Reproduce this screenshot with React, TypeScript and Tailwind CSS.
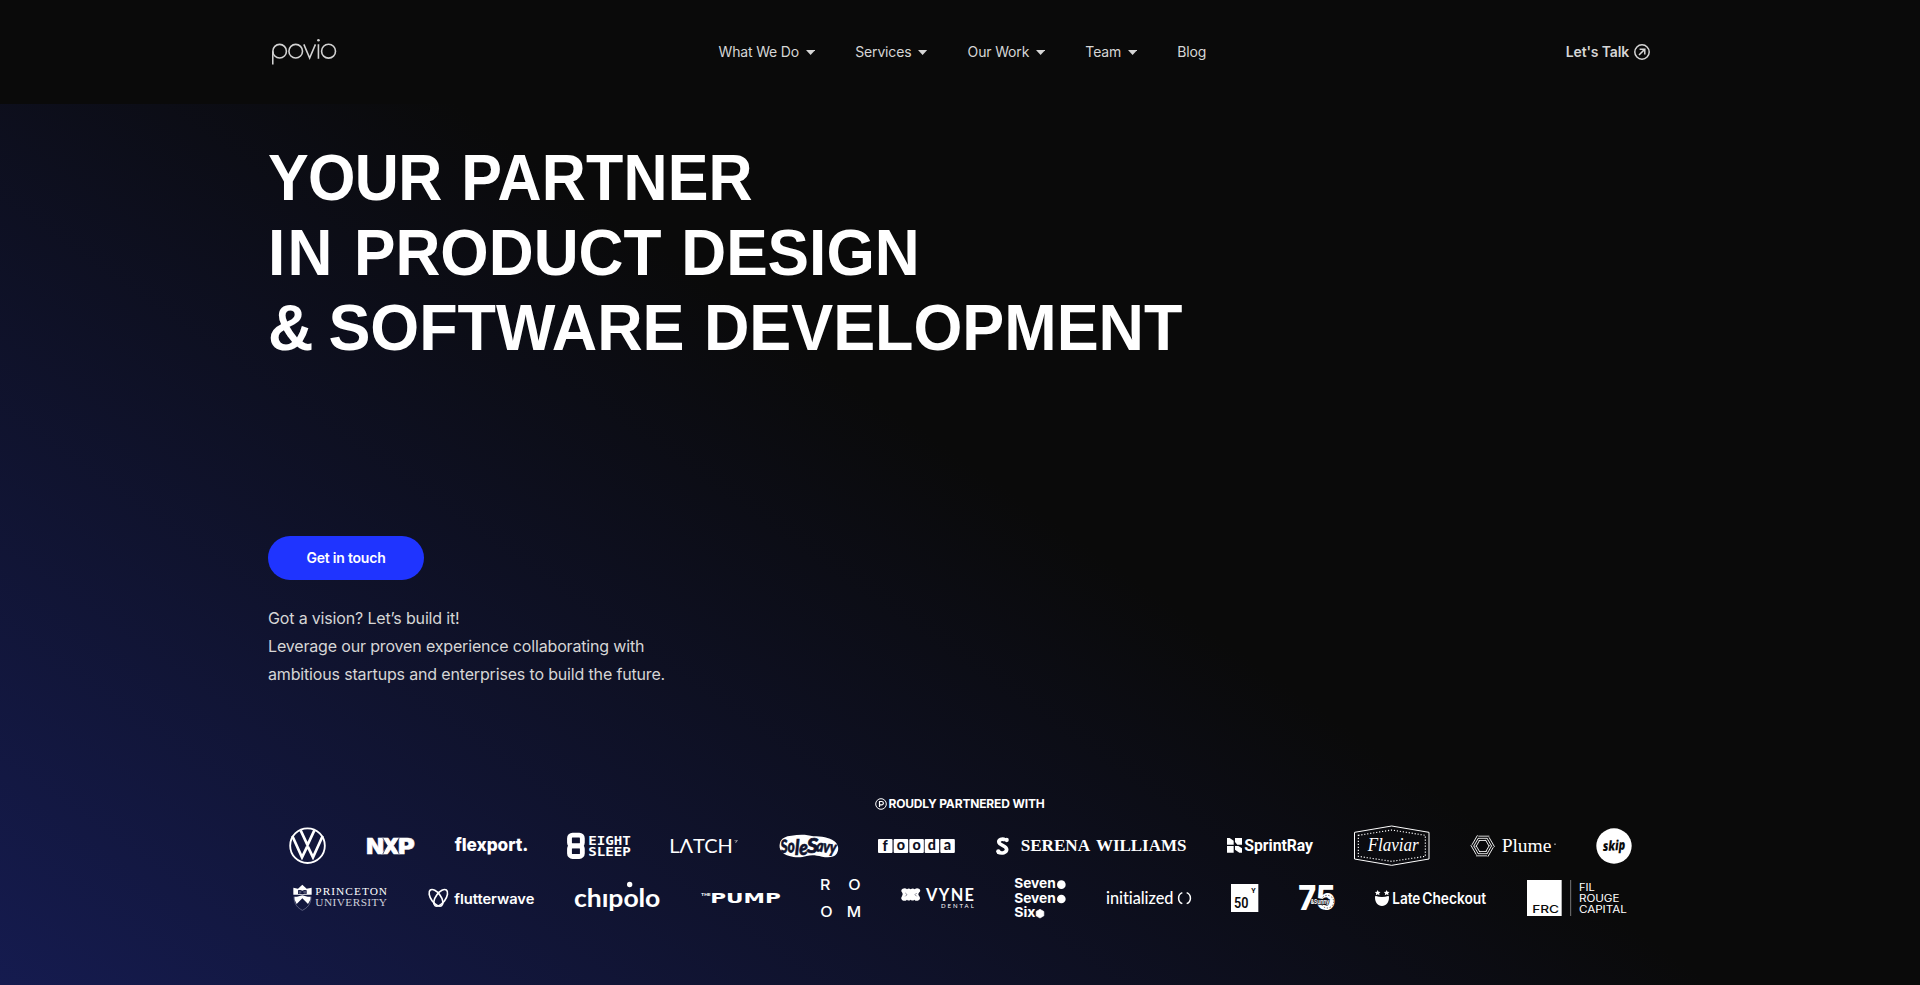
import type { ReactNode } from 'react';

const NAV = [
  { label: 'What We Do', menu: true },
  { label: 'Services', menu: true },
  { label: 'Our Work', menu: true },
  { label: 'Team', menu: true },
  { label: 'Blog', menu: false },
];

/* Partner marks are drawn at three units to the pixel. */
function Mark({ box, label, className, children }: { box: string; label: string; className: string; children: ReactNode }) {
  return (
    <svg viewBox={box} role="img" aria-label={label} className={`shrink-0 overflow-visible ${className}`} fill="#fff">
      {children}
    </svg>
  );
}

type TProps = { x: number; y: number; s: number; w?: number; c?: string; fill?: string; transform?: string; spaced?: boolean; children: ReactNode };

function T({ x, y, s, w, c = '', fill, transform, spaced, children }: TProps) {
  return (
    <text x={x} y={y} fontSize={s} textLength={w} lengthAdjust={spaced ? 'spacing' : 'spacingAndGlyphs'} className={c} fill={fill} transform={transform}>
      {children}
    </text>
  );
}

const inter = "font-['Inter',sans-serif]";
const serif = "font-['Liberation_Serif',serif]";
const lato = "font-['Lato',sans-serif]";

function PovioLogo() {
  return (
    <svg viewBox="66 54 196 84" className="ml-1 h-7 w-[65px]" fill="none" stroke="#d2d2d2" strokeWidth="4.800" role="img" aria-label="povio">
      <circle cx="89" cy="93.500" r="20.500" />
      <path d="M68.300 134V93.500" />
      <circle cx="137.500" cy="93.500" r="20.500" />
      <path d="M162 73l17.500 41L197 73M206 73v43" />
      <circle cx="206" cy="60.500" r="4" fill="#d2d2d2" stroke="none" />
      <circle cx="236.500" cy="93.500" r="21" />
    </svg>
  );
}

function FirstRow() {
  return (
    <div className="flex h-[41px] w-[1344px] gap-10 pl-px">
      <Mark box="57 105 114 123" label="Volkswagen" className="h-[41px] w-[38px]">
        <g fill="none" stroke="#fff" strokeWidth="5.500">
          <circle cx="112.500" cy="167" r="52" />
          <path strokeWidth="8" d="M92 121l20.500 44L133 121M67 138l29 64 14-29h5l14 29 29-64" />
        </g>
      </Mark>
      <Mark box="291 105 144 123" label="NXP" className="h-[41px] w-12">
        <g stroke="#fff" strokeWidth="1.500">
          <T x={289} y={191.500} s={65} w={53} c={`${inter} font-black`}>N</T>
          <T x={334} y={191.500} s={65} w={56} c={`${inter} font-black`}>X</T>
          <T x={384} y={191.500} s={65} w={50} c={`${inter} font-black`}>P</T>
        </g>
        <path d="M338 143l13 24-13 26M388 143l-13 24 13 26" fill="none" stroke="#11153a" strokeWidth="2" />
      </Mark>
      <Mark box="554 105 216 123" label="flexport." className="h-[41px] w-[72px]">
        <T x={553} y={184} s={54} w={221} c={`${inter} font-extrabold`}>flexport.</T>
      </Mark>
      <Mark box="890 105 192 123" label="Eight Sleep" className="h-[41px] w-16">
        <g fill="none" stroke="#fff" strokeWidth="14.500">
          <rect x="897.500" y="135.500" width="38.500" height="32" rx="9" />
          <rect x="897.500" y="167.500" width="38.500" height="32" rx="9" />
        </g>
        <T x={954} y={165} s={37} w={127} c="font-['DejaVu_Sans_Mono',monospace] font-bold">EIGHT</T>
        <T x={954} y={199} s={37} w={127} c="font-['DejaVu_Sans_Mono',monospace] font-bold">SLEEP</T>
      </Mark>
      <Mark box="153 105 204 123" label="Latch" className="h-[41px] w-[68px]">
        <T x={148} y={188} s={55} w={190} c={lato}>LΛTCH</T>
        <path d="M343 152h9l-7 6M352 150l-4 8" fill="none" stroke="#aaa" strokeWidth="2" />
      </Mark>
      <Mark box="477 105 177 123" label="SoleSavy" className="h-[41px] w-[59px]">
        <path d="M480 158c4-14 18-20 34-21 24-4 46-4 66 2 24 0 48 4 62 14 14 10 16 26 8 38-8 12-26 12-44 9-18-4-30-6-46-2-16 5-36 5-52 0-20-5-34-20-28-40z" />
        <g fill="#0f122c" stroke="#0f122c" strokeWidth="2">
          <T x={482} y={188} s={54} w={42} c={`${lato} font-black italic`} transform="rotate(-4 500 170)">So</T>
          <T x={525} y={194} s={60} w={38} c={`${lato} font-black italic`}>le</T>
          <T x={560} y={190} s={60} w={34} c={`${lato} font-black italic`}>S</T>
          <T x={589} y={187} s={50} w={60} c={`${lato} font-black italic`} transform="rotate(6 618 175)">avy</T>
        </g>
      </Mark>
      <Mark box="774 105 234 123" label="Fooda" className="h-[41px] w-[78px]">
        {[774, 821, 868, 914, 961].map((x, i) => (
          <g key={x}>
            <rect x={x} y="147" width="43.500" height="42" rx="3" />
            <text x={x + 21.5} y={i === 0 ? 184 : 181} textAnchor="middle" fontSize="43" fill="#0e1124" className={`${lato} font-black`}>
              {'fooda'[i]}
            </text>
          </g>
        ))}
      </Mark>
      <Mark box="78 105 573 123" label="Serena Williams" className="h-[41px] w-[191px]">
        <path d="M106 150c-9-6-22-1-19 8 3 9 22 8 23 20 0 10-14 14-27 8" fill="none" stroke="#fff" strokeWidth="11" />
        <circle cx="110" cy="150" r="6.500" />
        <circle cx="85" cy="184" r="6.500" />
        <T x={152} y={183} s={50} w={208} c={`${serif} font-bold`}>SERENA</T>
        <T x={378} y={183} s={50} w={271} c={`${serif} font-bold`}>WILLIAMS</T>
      </Mark>
      <Mark box="771 105 261 123" label="SprintRay" className="h-[41px] w-[87px]">
        <path d="M771 144l8 0 12 8v12h-20zM795 144h21v20h-14l-7-8zM771 168h20v20h-20zM795 168h10l11 7v13h-8l-13-9z" />
        <T x={823} y={184} s={51} w={206} c="font-['Roboto',sans-serif] font-bold">SprintRay</T>
      </Mark>
      <Mark box="102 105 228 123" label="Flaviar" className="h-[41px] w-[76px]">
        <path d="M103.500 127L215 108l112 19v80l-112 19-111.500-19z" fill="none" stroke="#fff" strokeWidth="3" />
        <path d="M115 136l100-16 101 16v63l-101 15-100-15z" fill="none" stroke="#fff" strokeWidth="3.500" strokeDasharray="3.500 5.500" />
        <T x={143} y={184} s={57} w={153} c={`${serif} italic`}>Flaviar</T>
      </Mark>
      <Mark box="450 105 258 123" label="Plume" className="h-[41px] w-[86px]">
        <g fill="none" stroke="#fff" strokeWidth="2.500">
          {[0, 60, 120, 180, 240, 300].map((a) => (
            <path key={a} transform={`rotate(${a} 488 168)`} d="M475 138.500h33M474 145h28M476 151.500h22" />
          ))}
        </g>
        <T x={545} y={186} s={54} w={149} c={serif}>Plume</T>
        <rect x="703" y="161" width="4" height="3" />
      </Mark>
      <Mark box="828 105 108 123" label="skip" className="h-[41px] w-9">
        <circle cx="882" cy="168" r="53" />
        <T x={848} y={181} s={41} w={68} fill="#0a0a0a" c="font-['Open_Sans',sans-serif] font-extrabold italic" transform="rotate(-3 882 168)">skip</T>
      </Mark>
    </div>
  );
}

function SecondRow() {
  return (
    <div className="mt-[11px] flex h-[42px] w-[1334px] gap-10">
      <Mark box="69 261 285 126" label="Princeton University" className="h-[42px] w-[95px]">
        <path d="M70 293l14 3 13-12 13 12 15-3v21H70zM73 320h8l16-4 16 4h9v8l-8 14-17-17-17 17-7-14z" />
        <path d="M84 301q7-3 13 1 6-4 13-1v11q-7-2-13 1-6-3-13-1z" fill="#12163e" />
        <path d="M86 306h8M100 306h8" stroke="#fff" strokeWidth="1.500" />
        <path d="M72 320c0 24 12 34 25 41 14-7 26-17 26-41" fill="none" stroke="#7b7f9c" strokeWidth="2" />
        <T x={136} y={316} s={34} w={215} c={serif} spaced>PRINCETON</T>
        <T x={136} y={348} s={34} w={215} c={serif} fill="#d0d1da" spaced>UNIVERSITY</T>
      </Mark>
      <Mark box="474 261 321 126" label="flutterwave" className="h-[42px] w-[107px]">
        <g fill="none" stroke="#fff" strokeWidth="5">
          <ellipse cx="498" cy="323.500" rx="14.500" ry="29" transform="rotate(-36 498 323.500)" />
          <ellipse cx="512" cy="323.500" rx="14.500" ry="29" transform="rotate(36 512 323.500)" />
        </g>
        <T x={553} y={341} s={41} w={240} c={`${inter} font-semibold`}>flutterwave</T>
      </Mark>
      <Mark box="915 261 258 126" label="chipolo" className="h-[42px] w-[86px]">
        <T x={912} y={350} s={73} w={259} c={`${lato} font-bold`}>chıpolo</T>
        <circle cx="1079" cy="283.500" r="8" />
      </Mark>
      <Mark box="242 261 240 126" label="The Pump" className="h-[42px] w-20">
        <T x={242} y={317} s={11} w={29} c={`${inter} font-bold`}>THE</T>
        <T x={270} y={340} s={43} w={211} c="font-['DejaVu_Sans',sans-serif] font-bold">PUMP</T>
      </Mark>
      <Mark box="603 261 120 126" label="Room" className="h-[42px] w-10">
        <T x={600} y={300} s={44} w={31} c={`${inter} font-medium`}>R</T>
        <T x={685} y={300} s={44} w={37} c={`${inter} font-medium`}>O</T>
        <T x={601} y={381} s={44} w={37} c={`${inter} font-medium`}>O</T>
        <T x={680} y={381} s={44} w={43} c={`${inter} font-medium`}>M</T>
      </Mark>
      <Mark box="843 261 222 126" label="Vyne Dental" className="h-[42px] w-[74px]">
        <path d="M848 296q8-4 13 2 5-5 11 0 6-5 12 0 6-6 13-2 7 5 1 11-6 6 0 12 5 8-2 12-8 4-13-2-5 5-11 0-6 5-11 0-6 6-14 2-6-5-1-12 5-6 0-12-5-6 2-11z" />
        <path d="M856 309l5 5-5 5M890 309l-5 5 5 5" fill="none" stroke="#0f1128" strokeWidth="1.500" />
        <g className="tracking-[4px]">
          <T x={918} y={332} s={49} w={148} c={`${lato} font-bold`}>VYNE</T>
        </g>
        <T x={963} y={355} s={18} w={98} c={lato} spaced>DENTAL</T>
      </Mark>
      <Mark box="136 261 156 126" label="Seven Seven Six" className="h-[42px] w-[52px]">
        <T x={134} y={295} s={41} w={124} c={`${inter} font-bold`}>Seven</T>
        <T x={134} y={338} s={41} w={124} c={`${inter} font-bold`}>Seven</T>
        <T x={134} y={382} s={41} w={63} c={`${inter} font-bold`}>Six</T>
        <circle cx="275" cy="284" r="13" />
        <circle cx="275" cy="327" r="13" />
        <path d="M211 358l11.500 6.500v13L211 384l-11.500-6.500v-13z" stroke="#fff" strokeWidth="2" />
      </Mark>
      <Mark box="411 261 252 126" label="initialized" className="h-[42px] w-[84px]">
        <T x={408} y={342} s={50} w={202} c={`${lato} font-medium`}>initialized</T>
        <path d="M637 308c-15 6-15 27 0 33M650 308c15 6 15 27 0 33" fill="none" stroke="#fff" strokeWidth="4.500" />
      </Mark>
      <Mark box="783 261 84 126" label="50Y" className="h-[42px] w-7">
        <rect x="783" y="282" width="82" height="84" />
        <T x={792} y={354} s={44} w={43} fill="#0a0a0c" c="font-['Roboto',sans-serif] font-semibold">50</T>
        <T x={844} y={308} s={23} w={13} fill="#0a0a0c" c="font-['Roboto',sans-serif] font-bold">Y</T>
      </Mark>
      <Mark box="987 261 108 126" label="75 and Sunny" className="h-[42px] w-9">
        <T x={985} y={360} s={102} w={112} c={`${inter} font-extrabold`}>75</T>
        <circle cx="1072" cy="335" r="19" fill="none" stroke="#0b0b12" strokeWidth="2" strokeDasharray="4 5" />
        <T x={1022} y={343} s={19} w={56} c={`${inter} font-bold stroke-[#0b0b12] stroke-[4px] [paint-order:stroke]`}>&amp;Sunny</T>
      </Mark>
      <Mark box="165 261 336 126" label="Late Checkout" className="h-[42px] w-28">
        <path d="M165 322c0-3 1-4 3-4 11 4 25 4 36 0 2 0 3 1 3 4 0 16-8 26-21 26s-21-10-21-26z" />
        <path d="M173 300l2.500 5 6 1-4 4 1 6-5.500-3-5.500 3 1-6-4-4 6-1zM200 300l2.500 5 6 1-4 4 1 6-5.500-3-5.500 3 1-6-4-4 6-1z" />
        <T x={217} y={342} s={46} w={84} c={`${inter} font-semibold`}>Late</T>
        <T x={307} y={342} s={46} w={191} c={`${inter} font-semibold`}>Checkout</T>
      </Mark>
      <Mark box="621 261 300 126" label="Fil Rouge Capital" className="h-[42px] w-[100px]">
        <rect x="621" y="270" width="104" height="108" />
        <T x={637} y={368} s={31} w={80} fill="#0a0a0a" c={`${inter} font-medium`}>FRC</T>
        <rect x="750.500" y="270" width="3" height="108" fill="#777" />
        <T x={777} y={303} s={29} w={47} c={inter}>FIL</T>
        <T x={777} y={335} s={29} w={121} c={inter}>ROUGE</T>
        <T x={777} y={368} s={29} w={143} c={inter}>CAPITAL</T>
      </Mark>
    </div>
  );
}

export default function App() {
  return (
    <div className="flex h-[985px] flex-col overflow-hidden bg-[#0a0a0a] font-['Inter',sans-serif] tracking-[-0.01em] text-[#d6d6d6]">
      <header className="h-[104px] shrink-0">
        <div className="mx-auto flex h-full w-[1384px] items-center">
          <div className="w-[450.500px] shrink-0">
            <PovioLogo />
          </div>
          <nav className="flex gap-10 text-sm">
            {NAV.map((item) => (
              <a key={item.label} href="#" className="flex items-center gap-[7px] whitespace-nowrap">
                {item.label}
                {item.menu && (
                  <svg viewBox="0 0 9.200 5" className="mt-px h-[5px] w-[9.200px]" fill="#d6d6d6">
                    <path d="M0 0h9.200L4.600 5z" />
                  </svg>
                )}
              </a>
            ))}
          </nav>
          <a href="#" className="mr-0.5 ml-auto flex items-center gap-[5px] text-sm font-semibold">
            Let's Talk
            <svg viewBox="0 0 16 16" className="size-4" fill="none" stroke="#d6d6d6" strokeWidth="1.500">
              <circle cx="8" cy="8" r="7.200" />
              <path d="M5 11l5.600-5.600M5.600 5.200h5.200v5.200" />
            </svg>
          </a>
        </div>
      </header>

      <main className="flex-1 bg-[linear-gradient(35deg,#151b4f_0%,#0a0a0a_54%)]">
        <div className="mx-auto flex h-full w-[1384px] flex-col pt-[37px]">
          <h1 className="flex h-[225px] flex-col font-['Liberation_Sans',sans-serif] text-[64px] leading-[75px] font-bold tracking-normal whitespace-pre text-white">
            <span className="origin-left scale-x-[.953] [word-spacing:3.500px]">
              <span className="tracking-[-0.700px]">YOUR </span>
              <span className="tracking-[0.200px]">PARTNER</span>
            </span>
            <span className="origin-left scale-x-[.972]">
              <span className="tracking-[2.200px]">IN </span>
              <span className="[word-spacing:2.500px]">PRODUCT DESIGN</span>
            </span>
            <span className="origin-left scale-x-[.982]">
              <span className="[word-spacing:-2.500px]">&amp; </span>
              <span className="[word-spacing:2px]">SOFTWARE DEVELOPMENT</span>
            </span>
          </h1>
          <a href="#" className="mt-[170px] flex h-11 w-[156px] items-center justify-center rounded-full bg-[#1f34ff] text-sm font-semibold tracking-[-0.015em] text-white">
            Get in touch
          </a>
          <p className="mt-6 text-base leading-7">
            Got a vision? Let’s build it!
            <br />
            Leverage our proven experience collaborating with
            <br />
            ambitious startups and enterprises to build the future.
          </p>
          <section className="mt-[107px] flex flex-col items-center">
            <h2 className="mb-3 flex h-[18px] items-center gap-px text-xs font-bold text-white">
              <svg viewBox="0 0 12 12" className="size-3" fill="none" stroke="#fff">
                <circle cx="6" cy="6" r="5.300" />
                <path d="M4.500 9V3.500h2.200a1.600 1.600 0 010 3.300H4.500" strokeWidth="1.200" />
              </svg>
              ROUDLY PARTNERED WITH
            </h2>
            <FirstRow />
            <SecondRow />
          </section>
        </div>
      </main>
    </div>
  );
}
